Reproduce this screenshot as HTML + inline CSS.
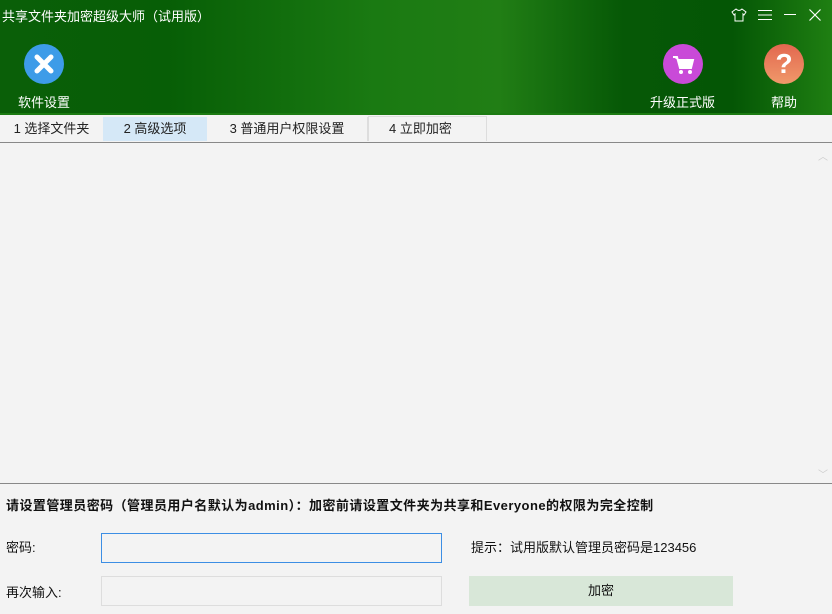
<!DOCTYPE html>
<html><head><meta charset="utf-8"><style>
*{margin:0;padding:0;box-sizing:border-box}
body{width:832px;height:614px;overflow:hidden;background:#f3f3f3;font-family:"Liberation Sans","Noto Sans CJK SC",sans-serif;font-size:12px;color:#111;position:relative}
.hdr{position:absolute;left:0;top:0;width:832px;height:115px;background:linear-gradient(90deg,#0a5f08 0%,#075e06 20%,#1a7a12 45%,#217e15 60%,#065806 75%,#045605 88%,#1f7f12 100%)}
.hdr .b{position:absolute;bottom:0;left:0;right:0;height:2px;background:#1c7b12}
.t{position:absolute;color:#fff}
.ic{position:absolute;width:40px;height:40px;border-radius:50%}
.tab{position:absolute;top:117px;height:24px;line-height:24px;font-size:13px;color:#222}
.a{position:absolute;font-size:13px}
</style></head><body>
<div class="hdr"><div class="b"></div></div>
<div class="t" style="left:2px;top:6px;font-size:13px">共享文件夹加密超级大师（试用版）</div>
<svg class="t" style="left:731px;top:8px" width="16" height="14" viewBox="0 0 16 14"><path d="M5 1 L1 4 L3 7 L4 6 L4 13 L12 13 L12 6 L13 7 L15 4 L11 1 Q8 4 5 1Z" fill="none" stroke="#fff" stroke-width="1"/></svg>
<svg class="t" style="left:758px;top:9px" width="14" height="12"><path d="M0 1.5H14M0 6H14M0 10.5H14" stroke="#fff"/></svg>
<svg class="t" style="left:784px;top:9px" width="12" height="12"><path d="M0 5.5H12" stroke="#fff"/></svg>
<svg class="t" style="left:809px;top:9px" width="12" height="12"><path d="M0.5 0.5L11.5 11.5M11.5 0.5L0.5 11.5" stroke="#fff" stroke-width="1.2"/></svg>
<div class="ic" style="left:24px;top:44px;background:#3d9ce8"><svg width="40" height="40"><path d="M13 13L27 27M27 13L13 27" stroke="#fff" stroke-width="5" stroke-linecap="round"/></svg></div>
<div class="t" style="left:18px;top:92px;font-size:13px">软件设置</div>
<div class="ic" style="left:663px;top:44px;background:#c94ad8"><svg width="40" height="40"><path d="M10 13H14L17 24H28L30 16H15" fill="#fff" stroke="#fff" stroke-width="2"/><circle cx="18" cy="28" r="2" fill="#fff"/><circle cx="27" cy="28" r="2" fill="#fff"/></svg></div>
<div class="t" style="left:650px;top:92px;font-size:13px">升级正式版</div>
<div class="ic" style="left:764px;top:44px;background:linear-gradient(#e2674f,#f0996a)"><div style="color:#fff;font-size:28px;font-weight:bold;text-align:center;line-height:40px">?</div></div>
<div class="t" style="left:771px;top:92px;font-size:13px">帮助</div>
<div style="position:absolute;left:0;top:115px;width:832px;height:27px;background:#f3f3f3"></div>
<div class="tab" style="left:0;width:103px;text-align:center">1 选择文件夹</div>
<div class="tab" style="left:103px;width:104px;background:#d5e8f7;text-align:center">2 高级选项</div>
<div class="tab" style="left:207px;width:161px;border-right:1px solid #ddd;text-align:center">3 普通用户权限设置</div>
<div class="tab" style="left:368px;width:119px;top:116px;height:25px;border:1px solid #ddd;border-bottom:none;padding-left:20px">4 立即加密</div>
<div style="position:absolute;left:0;top:142px;width:832px;height:1px;background:#888"></div>
<div style="position:absolute;left:818px;top:148px;color:#ccc;font-size:10px">︿</div>
<div style="position:absolute;left:818px;top:466px;color:#ccc;font-size:10px">﹀</div>
<div style="position:absolute;left:0;top:483px;width:832px;height:1px;background:#888"></div>
<div class="a" style="left:6px;top:495px;font-weight:bold;letter-spacing:0.45px">请设置管理员密码（管理员用户名默认为admin）：加密前请设置文件夹为共享和Everyone的权限为完全控制</div>
<div class="a" style="left:6px;top:537px">密码:</div>
<div style="position:absolute;left:101px;top:533px;width:341px;height:30px;border:1px solid #3c8ee4;background:#f3f3f3"></div>
<div class="a" style="left:471px;top:537px">提示：试用版默认管理员密码是123456</div>
<div class="a" style="left:6px;top:582px">再次输入:</div>
<div style="position:absolute;left:101px;top:576px;width:341px;height:30px;border:1px solid #ddd;background:#f3f3f3"></div>
<div style="position:absolute;left:469px;top:576px;width:264px;height:30px;background:#d8e7d8;text-align:center;line-height:30px;font-size:13px">加密</div>
</body></html>
